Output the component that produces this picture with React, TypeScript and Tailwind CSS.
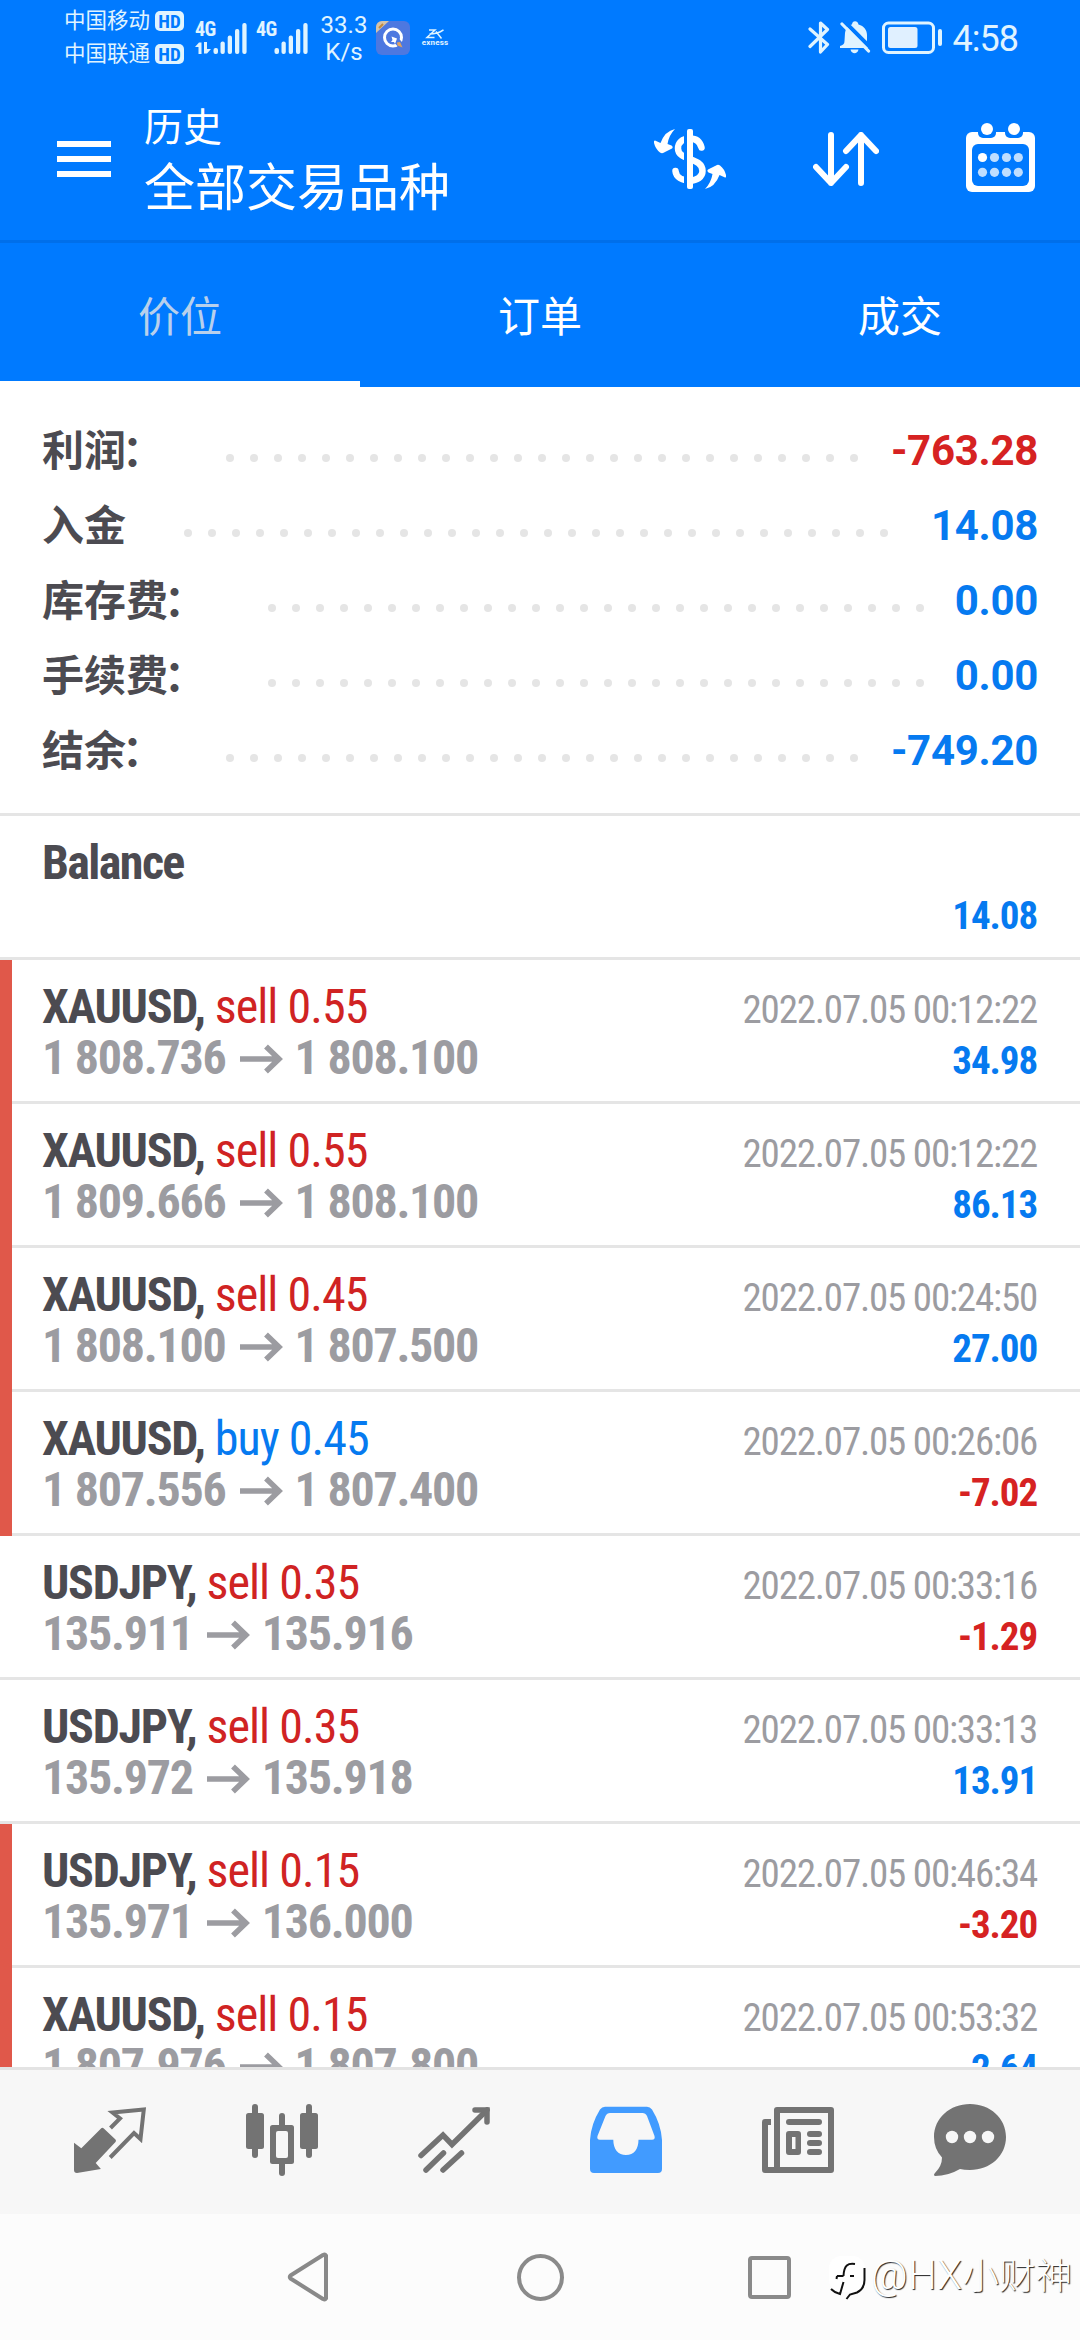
import React, { ReactNode } from 'react';
import clsx from 'clsx';

interface SummaryItem {
  label: string;
  value: string;
  colon?: boolean;
  negative?: boolean;
}

interface Deal {
  symbol: string;
  side: 'buy' | 'sell';
  volume: string;
  open: string;
  close: string;
  time: string;
  profit: string;
  marked?: boolean;
}

const SUMMARY: SummaryItem[] = [
  { label: '利润', colon: true, value: '-763.28', negative: true },
  { label: '入金', value: '14.08' },
  { label: '库存费', colon: true, value: '0.00' },
  { label: '手续费', colon: true, value: '0.00' },
  { label: '结余', colon: true, value: '-749.20' },
];

const DEALS: Deal[] = [
  { symbol: 'XAUUSD', side: 'sell', volume: '0.55', open: '1 808.736', close: '1 808.100', time: '2022.07.05 00:12:22', profit: '34.98', marked: true },
  { symbol: 'XAUUSD', side: 'sell', volume: '0.55', open: '1 809.666', close: '1 808.100', time: '2022.07.05 00:12:22', profit: '86.13', marked: true },
  { symbol: 'XAUUSD', side: 'sell', volume: '0.45', open: '1 808.100', close: '1 807.500', time: '2022.07.05 00:24:50', profit: '27.00', marked: true },
  { symbol: 'XAUUSD', side: 'buy', volume: '0.45', open: '1 807.556', close: '1 807.400', time: '2022.07.05 00:26:06', profit: '-7.02', marked: true },
  { symbol: 'USDJPY', side: 'sell', volume: '0.35', open: '135.911', close: '135.916', time: '2022.07.05 00:33:16', profit: '-1.29' },
  { symbol: 'USDJPY', side: 'sell', volume: '0.35', open: '135.972', close: '135.918', time: '2022.07.05 00:33:13', profit: '13.91' },
  { symbol: 'USDJPY', side: 'sell', volume: '0.15', open: '135.971', close: '136.000', time: '2022.07.05 00:46:34', profit: '-3.20', marked: true },
  { symbol: 'XAUUSD', side: 'sell', volume: '0.15', open: '1 807.976', close: '1 807.800', time: '2022.07.05 00:53:32', profit: '2.64', marked: true },
];

const TABS = ['价位', '订单', '成交'];

const HdBadge = () => (
  <span className="w-[29px] h-[20px] rounded-[5px] bg-[#e0f4ff] text-[#007aff] text-[19px] leading-[21px] font-bold text-center [font-stretch:75%]">
    HD
  </span>
);

const Signal: React.FC<{ transfer?: boolean }> = ({ transfer }) => (
  <div className="w-[52px] h-[34px] flex items-end justify-between">
    <div className="h-full flex flex-col justify-between text-[#e0f4ff]">
      <span className="text-[20px] leading-[18px] font-bold [font-stretch:75%] tracking-[-0.5px]">4G</span>
      {transfer && (
        <svg width="16" height="12" viewBox="0 0 16 12" fill="#e0f4ff">
          <path d="M0 5 4 0.500H6.500V12H3.500V5ZM9 0h3v7h4l-4 4.500H9Z" />
        </svg>
      )}
    </div>
    <svg className="-ml-1.5" width="34" height="32" viewBox="0 0 34 32" fill="#e0f4ff">
      <rect x="0.5" y="26" width="4.500" height="6" rx="2" />
      <rect x="7.500" y="19.500" width="4.300" height="12.500" rx="2" />
      <rect x="14.700" y="13.500" width="4.300" height="18.500" rx="2" />
      <rect x="22" y="7" width="4.300" height="25" rx="2" />
      <rect x="29.300" y="1" width="4.300" height="31" rx="2" />
    </svg>
  </div>
);

const StatusBar = () => (
  <div className="h-[75px] flex items-start text-[#e0f4ff]">
    <div className="ml-[64px] mt-[6px] flex flex-col gap-[3px] text-[21.500px] leading-[30px]">
      <div className="flex items-center gap-[5px]">
        中国移动 <HdBadge />
      </div>
      <div className="flex items-center gap-[5px]">
        中国联通 <HdBadge />
      </div>
    </div>
    <div className="ml-[11px] mt-[20px] flex gap-[9px]">
      <Signal transfer />
      <Signal />
    </div>
    <div className="ml-[11px] mt-[12px] w-[50px] text-center text-[24px] leading-[27px]">
      <div>33.3</div>
      <div>K/s</div>
    </div>
    <svg className="ml-[7px] mt-[21px]" width="34" height="34" viewBox="0 0 34 34">
      <rect width="34" height="34" rx="6" fill="#4d78e0" />
      <path d="M6 0h7L0 12V6a6 6 0 0 1 6-6Z" fill="#d3c3a8" />
      <path d="M3 7l4-4" stroke="#c08a3e" strokeWidth="2" />
      <circle cx="17" cy="16.500" r="8.500" fill="none" stroke="#fff" strokeWidth="3" />
      <path d="M21 20l6 7" stroke="#4d78e0" strokeWidth="6" />
      <path d="M15.500 15.500l5.500 2-2 5.500-1-2-3 0 1.500-2Z" fill="#fff" />
      <path d="M21 21.500l3-.500 2.500 5.500-5-2Z" fill="#e0a260" />
    </svg>
    <div className="ml-[13px] mt-[29px] w-[24px] flex flex-col items-center">
      <svg width="20" height="10" viewBox="0 0 20 10" fill="none" stroke="#e0f4ff" strokeWidth="1.500">
        <path d="M4 1H10L2 8.500H9.500M4.500 5C10 5 14 4 18.500 .800M11 2.500 16.500 9.500" />
      </svg>
      <span className="text-[8px] leading-[7px] font-bold tracking-[0.2px]">exness</span>
    </div>
    <svg className="ml-auto mt-[20px]" width="22" height="35" viewBox="0 0 22 35" fill="none" stroke="#e0f4ff" strokeWidth="3.200" strokeLinejoin="round" strokeLinecap="round">
      <path d="M2 9 19.500 24.500 12.500 32V3L19.500 9.500 2 26.500" />
    </svg>
    <svg className="ml-[10px] mt-[21px]" width="31" height="34" viewBox="0 0 31 34" fill="#e0f4ff">
      <path d="M5 12C6 6 9 4 12 3.500c0-4.500 6-4.500 6.500 0C24 5 27 9 27 14v7c0 3 0 4 2.500 6H0v-2c3-1 4.500-2 4.500-5Z" />
      <path d="M10.500 28.500h8c-1 5-7 5-8 0Z" />
      <path d="M4 0 31 27" stroke="#007aff" strokeWidth="4" />
      <path d="M2 3 28.500 30" stroke="#e0f4ff" strokeWidth="3.200" strokeLinecap="round" />
    </svg>
    <svg className="ml-[11px] mt-[21px]" width="61" height="34" viewBox="0 0 61 34">
      <rect x="1.500" y="2" width="50" height="29.500" rx="5" fill="none" stroke="#e0f4ff" strokeWidth="3" />
      <rect x="6" y="6" width="29.500" height="21" rx="2.500" fill="#e0f0ff" />
      <rect x="56" y="8" width="4" height="17" rx="2" fill="#e0f4ff" />
    </svg>
    <div className="ml-[10px] mr-[62px] mt-[18px] text-[36px] leading-[42px] tracking-[-1px]">4:58</div>
  </div>
);

const Header = () => (
  <div className="h-[168px] flex items-start border-b-[3px] border-[#006fea]">
    <div className="ml-[57px] mt-[66px] flex flex-col gap-[9px]">
      <div className="w-[54px] h-[6px] bg-white" />
      <div className="w-[54px] h-[6px] bg-white" />
      <div className="w-[54px] h-[6px] bg-white" />
    </div>
    <div className="ml-[33px] mt-[26px] text-white">
      <div className="text-[39px] leading-[54px]">历史</div>
      <div className="mt-[1px] text-[51px] leading-[66px]">全部交易品种</div>
    </div>
    {/* Currency exchange */}
    <svg className="ml-auto mt-[54px]" width="72" height="60" viewBox="0 0 72 60" fill="#fff">
      <g fill="none" stroke="#fff" strokeWidth="6.500" strokeLinecap="round">
        <path d="M47.500 18.500C46 12.500 42 9.500 36 9.500 28 9.500 24 14 24 19.500 24 32 48.500 28 48.500 42 48.500 48 43 51.500 36 51.500 28 51.500 22 48 21.500 42" />
      </g>
      <rect x="30" width="3" height="60" fill="#007aff" />
      <rect x="33" width="6" height="60" rx="2" />
      <path d="M21 0Q11 2 6.500 14L1 11.500Q-.5 11.500 0 14 1.500 20 6 23.500 7.500 24.500 9 24L18 19.500Q19.500 18 17.500 16.500L13.500 15Q15 6 21 0Z" />
      <path transform="rotate(180 36 30)" d="M21 0Q11 2 6.500 14L1 11.500Q-.5 11.500 0 14 1.500 20 6 23.500 7.500 24.500 9 24L18 19.500Q19.500 18 17.500 16.500L13.500 15Q15 6 21 0Z" />
    </svg>
    {/* Sort */}
    <svg className="ml-[87px] mt-[57px]" width="66" height="54" viewBox="0 0 66 54" fill="none" stroke="#fff" strokeWidth="6" strokeLinecap="round" strokeLinejoin="round">
      <path d="M18 3V51M3 35 18 51 33 35M48 51V3M33 19 48 3 63 19" />
    </svg>
    {/* Calendar */}
    <svg className="ml-[87px] mr-[45px] mt-[48px]" width="69" height="69" viewBox="0 0 69 69" fill="#fff">
      <rect y="9" width="69" height="60" rx="6" />
      <rect x="6" y="21" width="57" height="42" rx="6" fill="#007aff" />
      <rect x="12" y="0" width="18" height="15" rx="5" fill="#007aff" />
      <rect x="39" y="0" width="18" height="15" rx="5" fill="#007aff" />
      <circle cx="21" cy="6" r="6" />
      <circle cx="48" cy="6" r="6" />
      {[34.5, 49.3].map(cy =>
        [16.5, 28.5, 40.5, 52.3].map(cx => (
          <circle key={`${cx}-${cy}`} cx={cx} cy={cy} r="4.600" fill={cx < 20 && cy < 40 ? '#fff' : '#bfdeff'} />
        ))
      )}
    </svg>
  </div>
);

const Tabs = () => (
  <div className="h-[144px] grid grid-cols-3">
    {TABS.map((tab, index) => (
      <div
        key={tab}
        className={clsx(
          'text-center text-[42px] leading-[150px] h-[144px] border-b-[6px]',
          index === 0 ? 'text-[#b8d0ec] border-white' : 'text-white border-[#007aff]'
        )}
      >
        {tab}
      </div>
    ))}
  </div>
);

const SummaryRow: React.FC<{ item: SummaryItem }> = ({ item }) => (
  <div className="h-[75px] flex items-center text-[42px] leading-[75px] font-bold">
    <span className="mt-[2px] text-[#4c4b51]">{item.label}</span>
    {item.colon && <span className="mt-[2px] -ml-[4px] mr-[4px] text-[#4c4b51]">：</span>}
    {/* Dotted leader, only whole dots are shown */}
    <div className="ml-[58px] mr-[20px] mt-[15px] flex-1 h-[8px] overflow-hidden flex flex-wrap gap-4">
      {Array.from({ length: 32 }, (_, i) => (
        <span key={i} className="w-[8px] h-[8px] rounded-full bg-[#e5e5e5]" />
      ))}
    </div>
    <span className={clsx('tracking-[-0.3px]', item.negative ? 'text-[#d62222]' : 'text-[#067af0]')}>
      {item.value}
    </span>
  </div>
);

const DealRow: React.FC<{ deal: Deal }> = ({ deal }) => (
  <div
    className={clsx(
      'h-[144px] shrink-0 flex',
      deal.marked ? 'bg-[#e0584a] pl-[12px]' : ''
    )}
  >
    <div
      className={clsx(
        'flex-1 pt-[21px] pr-[43px] bg-white border-b-[3px] border-[#e5e5e5] [font-stretch:75%]',
        deal.marked ? 'pl-[30px]' : 'pl-[42px]'
      )}
    >
      <div className="h-[51px] flex items-baseline justify-between leading-[51px]">
        <div className="text-[48px]">
          <span className="font-bold text-[#4c4b51] tracking-[-1.3px]">{deal.symbol},</span>
          <span
            className={clsx(
              'ml-[10px] tracking-[-0.95px]',
              deal.side === 'buy' ? 'text-[#067af0]' : 'text-[#d02323]'
            )}
          >
            {deal.side} {deal.volume}
          </span>
        </div>
        <span className="text-[39px] text-[#9c9ca1] tracking-[-1.2px]">{deal.time}</span>
      </div>
      <div className="h-[51px] flex items-baseline justify-between leading-[51px]">
        <div className="text-[48px] font-bold text-[#9c9ca1] tracking-[-1.25px] flex items-center">
          <span>{deal.open}</span>
          <svg className="ml-[14px] mr-[12px] mt-[2px]" width="43" height="30" viewBox="0 0 43 30" fill="none" stroke="#9c9ca1" strokeWidth="5.500">
            <path d="M0 15H39M26 2.500 39 15 26 27.500" />
          </svg>
          <span>{deal.close}</span>
        </div>
        <span
          className={clsx(
            'text-[39px] font-bold tracking-[-1.1px]',
            deal.profit.startsWith('-') ? 'text-[#d62222]' : 'text-[#067af0]'
          )}
        >
          {deal.profit}
        </span>
      </div>
    </div>
  </div>
);

const NavIcon: React.FC<{ children: ReactNode }> = ({ children }) => (
  <svg width="72" height="80" viewBox="0 0 72 80" fill="#737373" stroke="none">
    {children}
  </svg>
);

const BottomNav = () => (
  <div className="h-[147px] shrink-0 px-[24px] bg-[#f7f7f7] border-t-[3px] border-[#e3e3e3] grid grid-cols-6 place-items-center">
    <NavIcon>
      <path d="M0 40.700 7.300 46.300 27 26.500Q28.300 25 29.800 26.500L41.500 37.500Q42.500 38.700 41.500 40L21.700 61 26.900 67 3 71Q0 71 0 68Z" />
      <path d="M36.500 26 46 16.500 38.500 10.500 69.800 7.500 66.500 37 60 31 36.200 55.500" fill="none" stroke="#737373" strokeWidth="4" />
    </NavIcon>
    <NavIcon>
      <rect y="11" width="18" height="36" rx="2.500" />
      <rect x="6" y="2" width="6" height="54" rx="3" />
      <rect x="54" y="11" width="18" height="36" rx="2.500" />
      <rect x="60" y="2" width="6" height="54" rx="3" />
      <rect x="33" y="11" width="6" height="63" rx="3" />
      <rect x="24" y="23" width="24" height="39" rx="2.500" />
      <rect x="30" y="29" width="12" height="27" rx="2" fill="#f7f7f7" />
    </NavIcon>
    <NavIcon>
      <g fill="none" stroke="#737373" strokeWidth="5.500" strokeLinecap="round">
        <path d="M3 53.500 25 33 34 42.500 69 8" strokeLinejoin="miter" />
        <path d="M57 8H69V20" />
        <path d="M8 68 25.500 51M25 68 43.500 51" />
      </g>
    </NavIcon>
    <NavIcon>
      <path
        fill="#419bff"
        fillRule="evenodd"
        d="M0 67V38Q1 22 10 7.500Q12 4.700 15 4.700H57Q60 4.700 62 7.500Q71 22 72 38V67Q72 71 68 71H4Q0 71 0 67ZM20 11Q17 11 15.500 14L7.500 34Q6.500 37.700 10 37.700H23.300C23.300 47 28 53 36 53S48.500 47 48.500 37.700H62Q65.500 37.700 64.500 34L57 14Q55.500 11 52.500 11Z"
      />
    </NavIcon>
    <NavIcon>
      <path
        fillRule="evenodd"
        d="M15 5H69Q72 5 72 8V68Q72 71 69 71H3Q0 71 0 68V20Q0 17 3 17H9V23H6V65H12V8Q12 5 15 5ZM18 11V65H66V11Z"
      />
      <rect x="24" y="17" width="36" height="6" rx="3" />
      <path fillRule="evenodd" d="M27 29H36Q39 29 39 32V50Q39 53 36 53H27Q24 53 24 50V32Q24 29 27 29ZM30 35V47H33.500V35Z" />
      <rect x="45" y="29" width="15" height="6" rx="3" />
      <rect x="45" y="38" width="15" height="6" rx="3" />
      <rect x="45" y="47" width="15" height="6" rx="3" />
    </NavIcon>
    <NavIcon>
      <path d="M36 2C56 2 72 16 72 35S56 68 36 68Q30 68 26 67 14 74 1 74-1 73 1 71 8 64 8 55.500 0 47 0 35C0 16 16 2 36 2Z" />
      <circle cx="18" cy="35" r="6.200" fill="#f7f7f7" />
      <circle cx="36" cy="35" r="6.200" fill="#f7f7f7" />
      <circle cx="54" cy="35" r="6.200" fill="#f7f7f7" />
    </NavIcon>
  </div>
);

const SystemNav = () => (
  <div className="h-[126px] shrink-0 relative bg-[#fcfcfc] flex items-center justify-center gap-[184px]">
    <svg className="-ml-0.5 mr-0.5" width="44" height="50" viewBox="0 0 44 50" fill="none" stroke="#898989" strokeWidth="4" strokeLinejoin="round">
      <path d="M39 3.500V46.500Q38 48 36 47L3.500 26.500Q2 25 3.500 23.500L36 3Q38 2 39 3.500Z" />
    </svg>
    <div className="w-[47px] h-[47px] rounded-full border-[4px] border-[#8a8a8a]" />
    <div className="w-[43px] h-[43px] rounded-[4px] border-[4px] border-[#8a8a8a]" />
    {/* Author mark over the bar */}
    <div className="absolute right-[8px] top-[35px] flex items-center gap-[3px]">
      <svg width="40" height="46" viewBox="0 0 40 46" fill="none">
        <rect x="1" y="2" width="36" height="36" rx="12" fill="#fff" />
        <path d="M27 10C20 9 16 11 15.500 22M9 22H15.500M8.500 25 9 22M15.500 28 12 40Q7 39 3 35M22 22h4M36.500 14V26Q36.500 35 29 38.500L22 40.500 18.500 45" stroke="#111" strokeWidth="2" />
      </svg>
      <div className="flex items-baseline leading-[54px] font-light text-white whitespace-nowrap [text-shadow:1px_1px_1px_#222]">
        <span className="text-[40px] tracking-[0.6px]">@HX</span>
        <span className="text-[36.500px]">小财神</span>
      </div>
    </div>
  </div>
);

export default function App() {
  return (
    <div className="w-[1080px] h-[2340px] flex flex-col overflow-hidden bg-white font-['Roboto','Noto_Sans_CJK_SC',sans-serif]">
      <div className="h-[387px] shrink-0 bg-[#007aff]">
        <StatusBar />
        <Header />
        <Tabs />
      </div>

      <div className="h-[429px] shrink-0 pt-[26px] px-[42px] border-b-[3px] border-[#e5e5e5]">
        {SUMMARY.map(item => (
          <SummaryRow key={item.label} item={item} />
        ))}
      </div>

      <div className="flex-1 min-h-0 overflow-hidden flex flex-col">
        <div className="h-[144px] shrink-0 pt-[21px] pl-[42px] pr-[43px] border-b-[3px] border-[#e5e5e5] font-bold leading-[51px] [font-stretch:75%]">
          <div className="text-[48px] text-[#4c4b51] tracking-[-1.6px]">Balance</div>
          <div className="pt-[3px] text-[39px] text-[#067af0] text-right tracking-[-1.1px]">14.08</div>
        </div>
        {DEALS.map((deal, index) => (
          <DealRow key={index} deal={deal} />
        ))}
      </div>

      <BottomNav />
      <SystemNav />
    </div>
  );
}
